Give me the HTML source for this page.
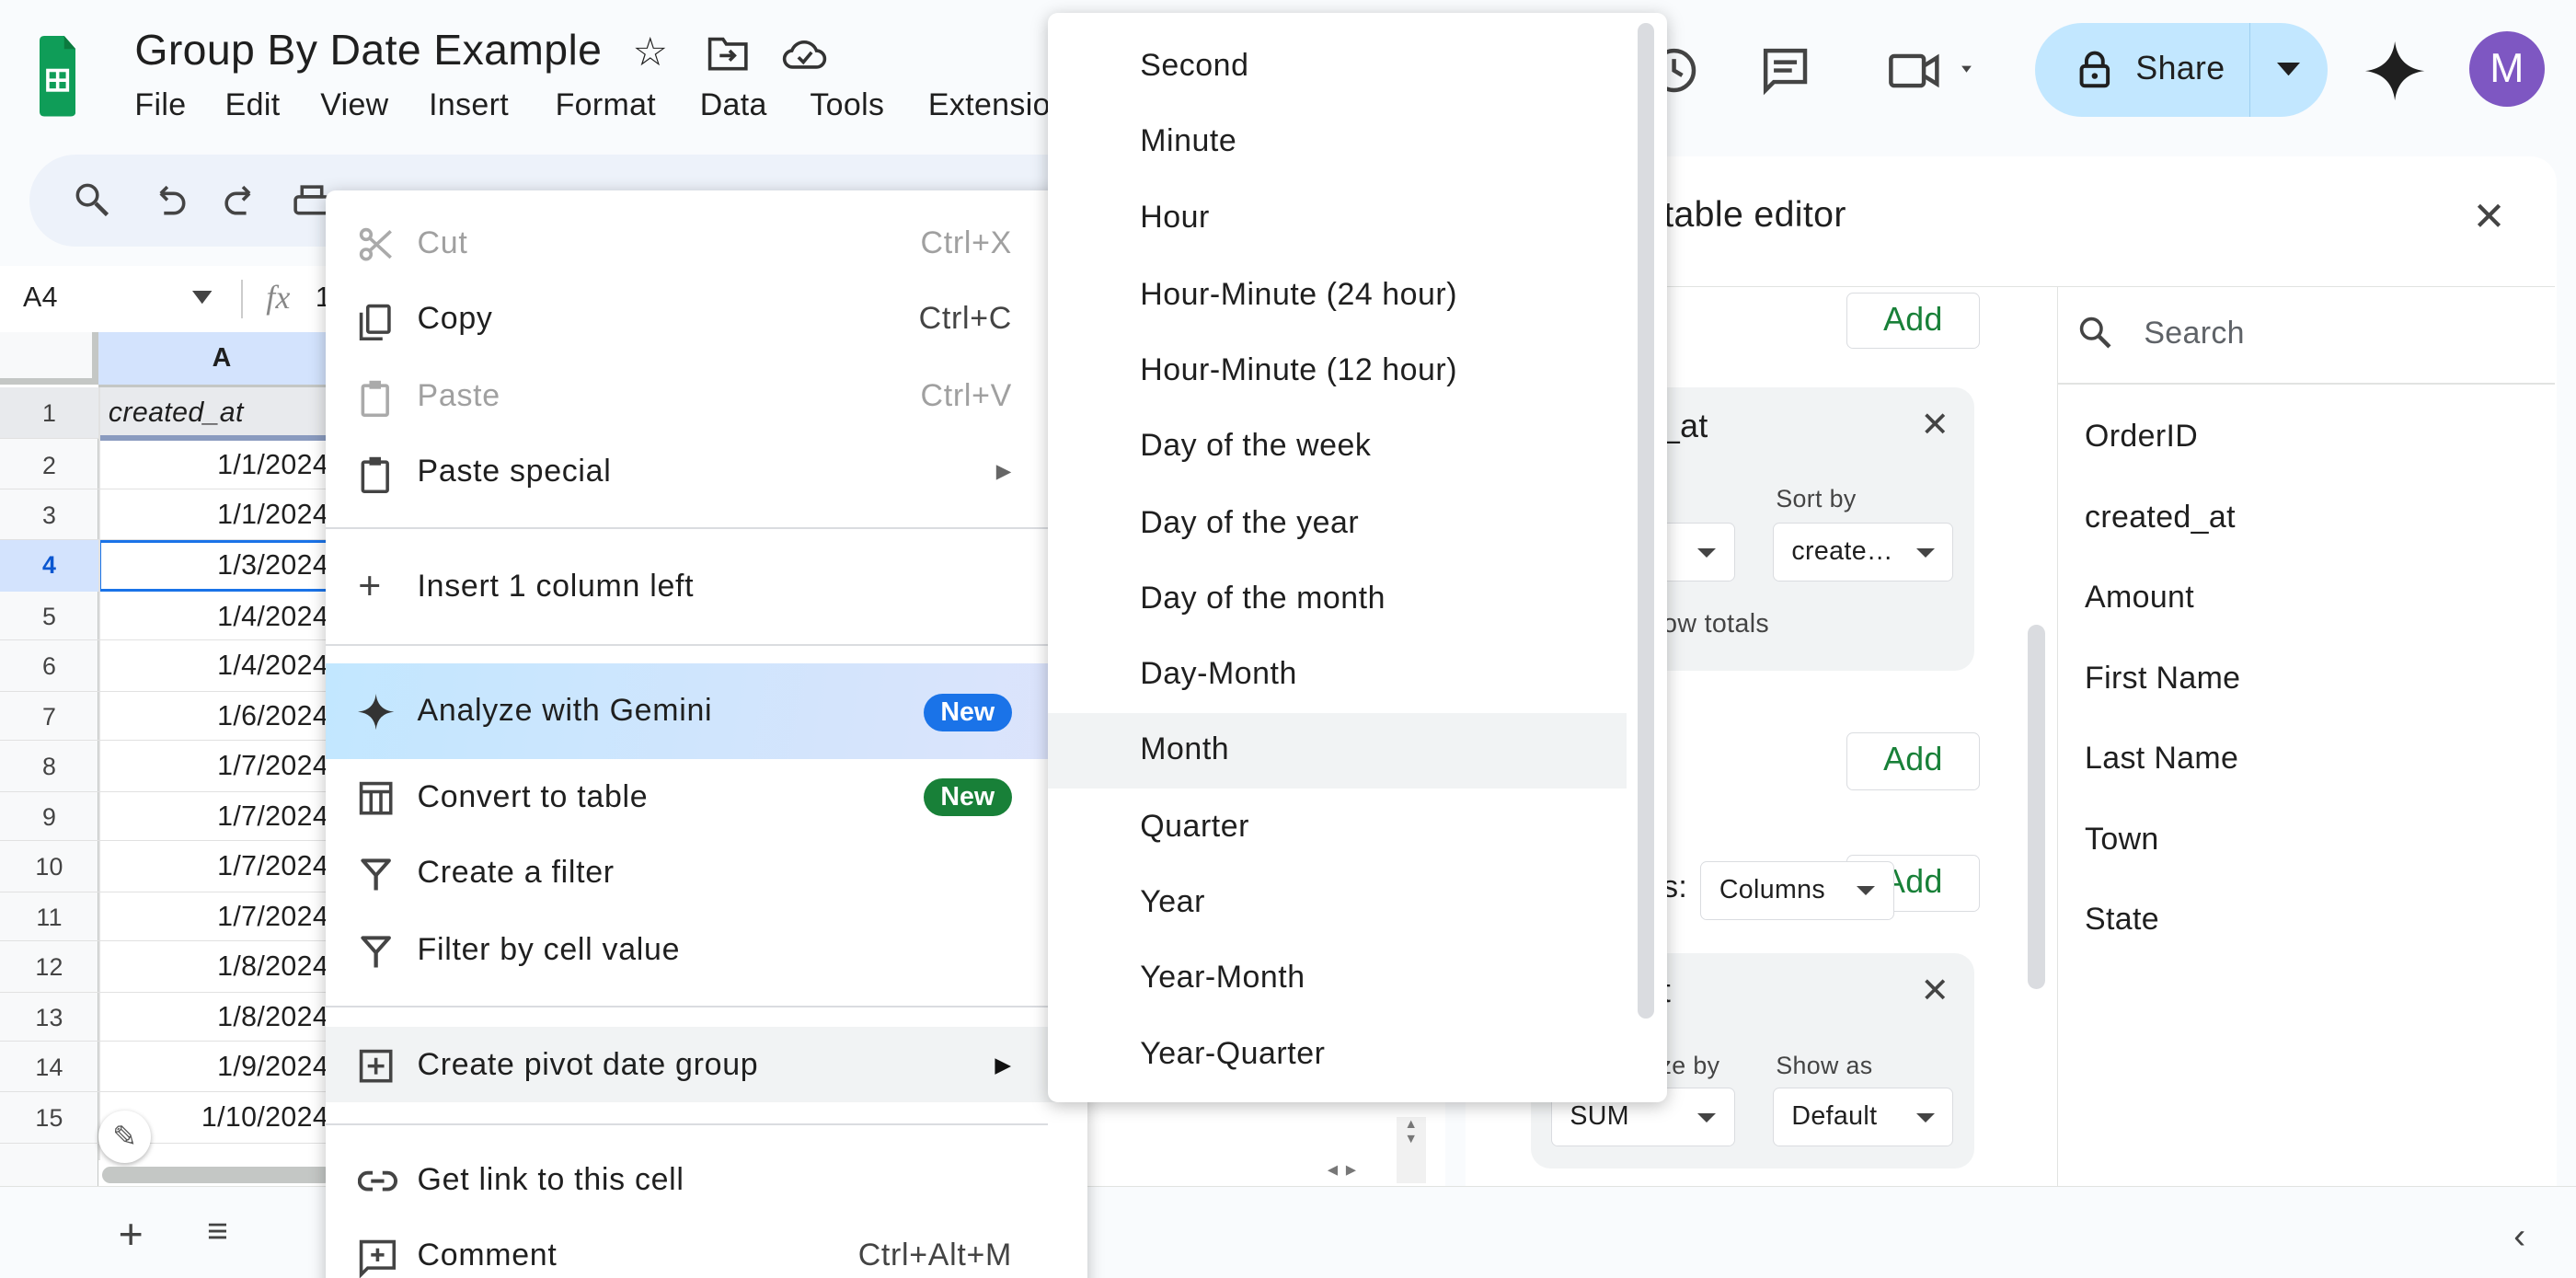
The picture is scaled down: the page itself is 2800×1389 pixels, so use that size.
<!DOCTYPE html>
<html><head><meta charset="utf-8"><style>
*{margin:0;padding:0;box-sizing:border-box}
html,body{width:2800px;height:1389px;overflow:hidden;background:#f9fbfd}
#r{zoom:1.7857;width:1568px;height:778px;position:relative;font-family:"Liberation Sans",Arial,sans-serif;color:#1f1f1f;overflow:hidden;letter-spacing:0.2px}
.a{position:absolute;white-space:nowrap}
.mi{position:absolute;left:0;width:464px;height:46px;font-size:19px;line-height:46px;padding-left:56px;letter-spacing:0.4px}
.mi .k{position:absolute;right:46px;top:0;color:#444}
.mi svg{position:absolute;left:20px;top:13px}
.sep{position:absolute;left:0;width:440px;height:1px;background:#dadce0}
.si{position:absolute;left:56px;font-size:19px;line-height:46px;height:46px;letter-spacing:0.3px}
.row{position:absolute;left:0;width:200px;height:31px;border-bottom:1px solid #e1e1e1}
.rn{position:absolute;left:0;width:60px;text-align:center;font-size:15px;color:#444;top:7px}
.rv{position:absolute;right:0;top:6px;font-size:17px}
.btn{position:absolute;border:1px solid #dadce0;border-radius:4px;background:#fff;color:#188038;font-size:20px;text-align:center;line-height:32px}
.dd{position:absolute;border:1px solid #dadce0;border-radius:4px;background:#fff;font-size:16px;line-height:34px;padding-left:11px;height:36px}
.dd:after{content:"";position:absolute;right:11px;top:15px;border:6px solid transparent;border-top-color:#444;border-bottom:0}
.fl{position:absolute;left:1269px;font-size:19px;color:#1f1f1f}
.mb{position:absolute;top:53px;font-size:19px}
</style></head><body><div id="r">
<!-- header -->
<svg class="a" style="left:24px;top:22px" width="22" height="49" viewBox="0 0 22 49"><path d="M0 3Q0 0 3 0H15L22 8V46Q22 49 19 49H3Q0 49 0 46Z" fill="#0f9d58"/><path d="M15 0V8H22Z" fill="#0b7a3e"/><rect x="5" y="21" width="12" height="12" fill="none" stroke="#fff" stroke-width="2"/><path d="M5 27H17M11 21V33" stroke="#fff" stroke-width="2"/></svg>
<div class="a" style="left:82px;top:15px;font-size:26px">Group By Date Example</div>
<div class="a" style="left:385px;top:18px;font-size:24px">☆</div>
<svg class="a" style="left:430px;top:22px" width="26" height="22" viewBox="0 0 26 22"><path d="M2 2H10L12 5H24V20H2Z" fill="none" stroke="#333" stroke-width="2"/><path d="M8 12H17M14 9L17 12L14 15" fill="none" stroke="#333" stroke-width="2"/></svg>
<svg class="a" style="left:476px;top:22px" width="28" height="22" viewBox="0 0 28 22"><path d="M7 19H21A5 5 0 0 0 21 9A8 8 0 0 0 6 9A5 5 0 0 0 7 19Z" fill="none" stroke="#333" stroke-width="2"/><path d="M10 13L13 16L18 10" fill="none" stroke="#333" stroke-width="2"/></svg>
<div class="mb" style="left:82px">File</div><div class="mb" style="left:137px">Edit</div><div class="mb" style="left:195px">View</div><div class="mb" style="left:261px">Insert</div><div class="mb" style="left:338px">Format</div><div class="mb" style="left:426px">Data</div><div class="mb" style="left:493px">Tools</div><div class="mb" style="left:565px">Extensions</div>
<div class="a" style="left:18px;top:94px;width:900px;height:56px;border-radius:28px;background:#edf2fa"></div>
<svg class="a" style="left:44px;top:110px" width="24" height="24" viewBox="0 0 24 24"><circle cx="9" cy="9" r="6" fill="none" stroke="#444" stroke-width="2"/><path d="M14 14L21 21" stroke="#444" stroke-width="2.5"/></svg>
<svg class="a" style="left:92px;top:110px" width="110" height="26" viewBox="0 0 110 26"><path d="M6 8H14A6 6 0 0 1 14 20H8M6 8L10 4M6 8L10 12" fill="none" stroke="#444" stroke-width="2"/><path d="M60 8H52A6 6 0 0 0 52 20H58M60 8L56 4M60 8L56 12" fill="none" stroke="#444" stroke-width="2"/><rect x="92" y="4" width="12" height="6" fill="none" stroke="#444" stroke-width="2"/><rect x="88" y="10" width="20" height="10" rx="2" fill="none" stroke="#444" stroke-width="2"/></svg>
<!-- right header -->
<svg class="a" style="left:1003px;top:27px" width="32" height="32" viewBox="0 0 32 32"><circle cx="16" cy="16" r="12" fill="none" stroke="#444" stroke-width="2.5"/><path d="M16 9V16L21 19" fill="none" stroke="#444" stroke-width="2.5"/></svg>
<svg class="a" style="left:1071px;top:27px" width="32" height="32" viewBox="0 0 32 32"><path d="M4 4H28V23H9L4 28Z" fill="none" stroke="#444" stroke-width="2.5"/><path d="M9 11H23M9 16H20" stroke="#444" stroke-width="2.5"/></svg>
<svg class="a" style="left:1148px;top:29px" width="60" height="28" viewBox="0 0 60 28"><rect x="3" y="5" width="20" height="18" rx="2" fill="none" stroke="#444" stroke-width="2.5"/><path d="M23 11L31 6V22L23 17" fill="none" stroke="#444" stroke-width="2.5"/><path d="M46 11L52 11L49 15Z" fill="#444"/></svg>
<div class="a" style="left:1239px;top:14px;width:178px;height:57px;border-radius:29px;background:#c2e7ff"></div>
<div class="a" style="left:1369px;top:14px;width:1px;height:57px;background:#9fcff0"></div>
<svg class="a" style="left:1265px;top:30px" width="20" height="24" viewBox="0 0 20 24"><rect x="2" y="10" width="16" height="12" rx="2" fill="none" stroke="#1f1f1f" stroke-width="2.2"/><path d="M5 10V7A5 5 0 0 1 15 7V10" fill="none" stroke="#1f1f1f" stroke-width="2.2"/><circle cx="10" cy="16" r="1.8" fill="#1f1f1f"/></svg>
<div class="a" style="left:1300px;top:30px;font-size:20px;font-weight:500">Share</div>
<svg class="a" style="left:1386px;top:38px" width="14" height="8"><path d="M0 0H14L7 8Z" fill="#1f1f1f"/></svg>
<svg class="a" style="left:1440px;top:25px" width="36" height="36" viewBox="0 0 36 36"><path d="M18 0Q20 16 36 18Q20 20 18 36Q16 20 0 18Q16 16 18 0Z" fill="#1f1f1f"/></svg>
<div class="a" style="left:1503px;top:19px;width:46px;height:46px;border-radius:50%;background:#7e57c2;color:#fff;font-size:25px;text-align:center;line-height:46px">M</div>
<!-- namebox row -->
<div class="a" style="left:0;top:162px;width:900px;height:40px;background:#fff"></div>
<div class="a" style="left:14px;top:172px;font-size:17px">A4</div>
<svg class="a" style="left:117px;top:177px" width="12" height="8"><path d="M0 0H12L6 8Z" fill="#444"/></svg>
<div class="a" style="left:147px;top:170px;width:1px;height:24px;background:#ccc"></div>
<div class="a" style="left:162px;top:169px;font-size:20px;font-style:italic;color:#888;font-family:'Liberation Serif',serif">fx</div>
<div class="a" style="left:192px;top:172px;font-size:17px">1</div>
<!-- grid -->
<div class="a" style="left:0;top:202px;width:880px;height:520px;background:#fff"></div>
<div class="a" style="left:0;top:202px;width:60px;height:32px;background:#f8f9fa;border-right:4px solid #c4c7c5;border-bottom:4px solid #c4c7c5"></div>
<div class="a" style="left:60px;top:202px;width:150px;height:32px;background:#d3e3fd;text-align:center;font-size:16px;line-height:32px;font-weight:bold">A</div>
<div class="a" style="left:60px;top:234px;width:150px;height:2px;background:#c4c7c5"></div>
<div class="a" style="left:0;top:236px;width:60px;height:486px;background:#f8f9fa;border-right:1px solid #c4c7c5"></div>
<div class="a" style="left:0;top:236px;width:880px">
<div class="row" style="top:0;background:#e8eaed"><div class="rn">1</div><div class="a" style="left:66px;top:6px;font-size:17px;font-style:italic">created_at</div></div>
<div class="a" style="left:60px;top:29px;width:140px;height:3px;background:#8a9bbf"></div>
<div class="row" style="top:32px;height:30px"><div class="rn">2</div><div class="rv">1/1/2024</div></div>
<div class="row" style="top:62px;height:31px"><div class="rn">3</div><div class="rv">1/1/2024</div></div>
<div class="row" style="top:93px;height:31px;"><div class="rn" style="background:#d3e3fd;height:31px;top:0;line-height:31px;font-weight:bold;color:#0b57d0">4</div><div class="rv">1/3/2024</div></div>
<div class="a" style="left:60px;top:93px;width:150px;height:31px;border:2px solid #1a73e8"></div>
<div class="row" style="top:124px;height:30px"><div class="rn">5</div><div class="rv">1/4/2024</div></div>
<div class="row" style="top:154px;height:31px"><div class="rn">6</div><div class="rv">1/4/2024</div></div>
<div class="row" style="top:185px;height:30px"><div class="rn">7</div><div class="rv">1/6/2024</div></div>
<div class="row" style="top:215px;height:31px"><div class="rn">8</div><div class="rv">1/7/2024</div></div>
<div class="row" style="top:246px;height:30px"><div class="rn">9</div><div class="rv">1/7/2024</div></div>
<div class="row" style="top:276px;height:31px"><div class="rn">10</div><div class="rv">1/7/2024</div></div>
<div class="row" style="top:307px;height:30px"><div class="rn">11</div><div class="rv">1/7/2024</div></div>
<div class="row" style="top:337px;height:31px"><div class="rn">12</div><div class="rv">1/8/2024</div></div>
<div class="row" style="top:368px;height:30px"><div class="rn">13</div><div class="rv">1/8/2024</div></div>
<div class="row" style="top:398px;height:31px"><div class="rn">14</div><div class="rv">1/9/2024</div></div>
<div class="row" style="top:429px;height:31px"><div class="rn">15</div><div class="rv">1/10/2024</div></div>
</div>
<div class="a" style="left:60px;top:236px;width:1px;height:470px;background:#e1e1e1"></div>
<div class="a" style="left:60px;top:676px;width:32px;height:32px;border-radius:50%;background:#fff;box-shadow:0 1px 3px rgba(0,0,0,.3);font-size:18px;text-align:center;line-height:32px;color:#555">✎</div>
<div class="a" style="left:62px;top:710px;width:140px;height:10px;border-radius:5px;background:#c4c7c5"></div>
<div class="a" style="left:850px;top:680px;width:18px;height:40px;background:#f1f1f1;font-size:8px;color:#777;text-align:center">▲<br>▼</div>
<div class="a" style="left:808px;top:708px;width:45px;height:14px;font-size:8px;color:#777">◀ &nbsp;▶</div>
<!-- bottom bar -->
<div class="a" style="left:0;top:722px;width:1568px;height:56px;background:#f9fbfd;border-top:1px solid #e1e3e1"></div>
<div class="a" style="left:72px;top:736px;font-size:26px;color:#444">+</div>
<div class="a" style="left:126px;top:737px;font-size:22px;color:#444">≡</div>
<div class="a" style="left:1530px;top:740px;font-size:22px;color:#444">‹</div>
<!-- side panel -->
<div class="a" style="left:892px;top:95px;width:664px;height:627px;background:#fff;border-radius:16px 16px 0 0"></div>
<div class="a" style="left:1000px;top:118px;font-size:22px">t table editor</div>
<div class="a" style="left:1505px;top:118px;font-size:24px;color:#444">✕</div>
<div class="a" style="left:892px;top:174px;width:663px;height:1px;background:#e1e3e1"></div>
<div class="a" style="left:1252px;top:174px;width:1px;height:548px;background:#e1e3e1"></div>
<div class="a" style="left:1253px;top:233px;width:302px;height:1px;background:#e1e3e1"></div>
<svg class="a" style="left:1265px;top:192px" width="22" height="22" viewBox="0 0 22 22"><circle cx="8" cy="8" r="6" fill="none" stroke="#444" stroke-width="2"/><path d="M12.5 12.5L19 19" stroke="#444" stroke-width="2.5"/></svg>
<div class="a" style="left:1305px;top:192px;font-size:19px;color:#5f6368">Search</div>
<div class="fl" style="top:255px">OrderID</div>
<div class="fl" style="top:304px">created_at</div>
<div class="fl" style="top:353px">Amount</div>
<div class="fl" style="top:402px">First Name</div>
<div class="fl" style="top:451px">Last Name</div>
<div class="fl" style="top:500px">Town</div>
<div class="fl" style="top:549px">State</div>
<div class="a" style="left:1234px;top:380px;width:11px;height:222px;border-radius:6px;background:#dadce0"></div>
<div class="btn" style="left:1124px;top:178px;width:81px;height:34px">Add</div>
<div class="a" style="left:932px;top:236px;width:270px;height:172px;border-radius:12px;background:#f1f3f4"></div>
<div class="a" style="left:1000px;top:248px;font-size:20px;font-weight:500">d_at</div>
<div class="a" style="left:1169px;top:246px;font-size:21px;color:#444">✕</div>
<div class="a" style="left:1081px;top:295px;font-size:15px;color:#444">Sort by</div>
<div class="dd" style="left:944px;top:318px;width:112px"></div>
<div class="dd" style="left:1079px;top:318px;width:110px">create…</div>
<div class="a" style="left:1012px;top:371px;font-size:16px;color:#444">ow totals</div>
<div class="btn" style="left:1124px;top:446px;width:81px;height:35px">Add</div>
<div class="btn" style="left:1124px;top:520px;width:81px;height:35px">Add</div>
<div class="a" style="left:1012px;top:529px;font-size:19px;font-weight:500">s:</div>
<div class="dd" style="left:1035px;top:524px;width:118px;height:36px">Columns</div>
<div class="a" style="left:932px;top:580px;width:270px;height:131px;border-radius:12px;background:#f1f3f4"></div>
<div class="a" style="left:1000px;top:592px;font-size:20px;font-weight:500">nt</div>
<div class="a" style="left:1169px;top:590px;font-size:21px;color:#444">✕</div>
<div class="a" style="left:1010px;top:640px;font-size:15px;color:#444">ze by</div>
<div class="a" style="left:1081px;top:640px;font-size:15px;color:#444">Show as</div>
<div class="dd" style="left:944px;top:662px;width:112px">SUM</div>
<div class="dd" style="left:1079px;top:662px;width:110px">Default</div>
<!-- context menu -->
<div class="a" style="left:198px;top:116px;width:464px;height:680px;background:#fff;border-radius:6px;box-shadow:0 2px 10px rgba(0,0,0,.25)">
<div class="mi" style="top:9px;color:#a0a0a0"><svg width="22" height="22" viewBox="0 0 22 22"><circle cx="5" cy="5" r="3" fill="none" stroke="#aaa" stroke-width="2"/><circle cx="5" cy="17" r="3" fill="none" stroke="#aaa" stroke-width="2"/><path d="M7 7L20 19M7 15L20 3" stroke="#aaa" stroke-width="2"/></svg>Cut<span class="k" style="color:#a0a0a0">Ctrl+X</span></div>
<div class="mi" style="top:55px"><svg width="22" height="24" viewBox="0 0 22 24"><rect x="6" y="2" width="13" height="16" rx="1" fill="none" stroke="#444" stroke-width="2"/><path d="M2 6V22H15" fill="none" stroke="#444" stroke-width="2"/></svg>Copy<span class="k">Ctrl+C</span></div>
<div class="mi" style="top:102px;color:#a0a0a0"><svg width="22" height="24" viewBox="0 0 22 24"><rect x="3" y="4" width="15" height="18" rx="1" fill="none" stroke="#aaa" stroke-width="2"/><rect x="7" y="1" width="7" height="5" fill="#aaa"/></svg>Paste<span class="k" style="color:#a0a0a0">Ctrl+V</span></div>
<div class="mi" style="top:148px"><svg width="22" height="24" viewBox="0 0 22 24"><rect x="3" y="4" width="15" height="18" rx="1" fill="none" stroke="#444" stroke-width="2"/><rect x="7" y="1" width="7" height="5" fill="#444"/></svg>Paste special<span class="k" style="font-size:12px;color:#666">▶</span></div>
<div class="sep" style="top:205px"></div>
<div class="mi" style="top:218px"><span class="a" style="left:20px;top:0;font-size:24px;color:#444">+</span>Insert 1 column left</div>
<div class="sep" style="top:276px"></div>
<div class="mi" style="top:288px;height:58px;line-height:58px;background:linear-gradient(100deg,#c2e7ff,#dde3fb)"><svg width="22" height="22" viewBox="0 0 22 22" style="top:18px"><path d="M11 0Q12 10 22 11Q12 12 11 22Q10 12 0 11Q10 10 11 0Z" fill="#333"/></svg>Analyze with Gemini<span class="a" style="right:46px;top:18px;height:23px;width:54px;border-radius:12px;background:#1a73e8;color:#fff;font-size:16px;font-weight:bold;line-height:23px;text-align:center;letter-spacing:0">New</span></div>
<div class="mi" style="top:346px"><svg width="22" height="22" viewBox="0 0 22 22"><rect x="2" y="2" width="18" height="18" fill="none" stroke="#444" stroke-width="2"/><path d="M2 7H20M8 7V20M14 7V20" stroke="#444" stroke-width="2"/></svg>Convert to table<span class="a" style="right:46px;top:12px;height:23px;width:54px;border-radius:12px;background:#188038;color:#fff;font-size:16px;font-weight:bold;line-height:23px;text-align:center;letter-spacing:0">New</span></div>
<div class="mi" style="top:392px"><svg width="22" height="22" viewBox="0 0 22 22"><path d="M3 3H19L11 12Z" fill="none" stroke="#444" stroke-width="2.2" stroke-linejoin="round"/><path d="M11 12V21" stroke="#444" stroke-width="2.4"/></svg>Create a filter</div>
<div class="mi" style="top:439px"><svg width="22" height="22" viewBox="0 0 22 22"><path d="M3 3H19L11 12Z" fill="none" stroke="#444" stroke-width="2.2" stroke-linejoin="round"/><path d="M11 12V21" stroke="#444" stroke-width="2.4"/></svg>Filter by cell value</div>
<div class="sep" style="top:496px"></div>
<div class="mi" style="top:509px;background:#f1f3f4"><svg width="22" height="22" viewBox="0 0 22 22"><rect x="2" y="2" width="18" height="18" fill="none" stroke="#444" stroke-width="2"/><path d="M11 6V16M6 11H16" stroke="#444" stroke-width="2"/></svg>Create pivot date group<span class="k" style="font-size:13px;color:#111">▶</span></div>
<div class="sep" style="top:568px"></div>
<div class="mi" style="top:579px"><svg width="24" height="22" viewBox="0 0 24 22"><path d="M9 6H6A5 5 0 0 0 6 16H9M15 6H18A5 5 0 0 1 18 16H15M8 11H16" fill="none" stroke="#444" stroke-width="2.2"/></svg>Get link to this cell</div>
<div class="mi" style="top:625px"><svg width="24" height="24" viewBox="0 0 24 24"><path d="M2 2H22V18H6L2 22Z" fill="none" stroke="#444" stroke-width="2"/><path d="M12 6V14M8 10H16" stroke="#444" stroke-width="2"/></svg>Comment<span class="k">Ctrl+Alt+M</span></div>
</div>
<!-- submenu -->
<div class="a" style="left:638px;top:8px;width:377px;height:663px;background:#fff;border-radius:6px;box-shadow:0 2px 10px rgba(0,0,0,.25)">
<div class="a" style="left:0;top:426px;width:352px;height:46px;background:#f1f3f4"></div>
<div class="a" style="left:359px;top:6px;width:10px;height:606px;border-radius:5px;background:#dadce0"></div>
<div class="si" style="top:9px">Second</div>
<div class="si" style="top:55px">Minute</div>
<div class="si" style="top:101px">Hour</div>
<div class="si" style="top:148px">Hour-Minute (24 hour)</div>
<div class="si" style="top:194px">Hour-Minute (12 hour)</div>
<div class="si" style="top:240px">Day of the week</div>
<div class="si" style="top:287px">Day of the year</div>
<div class="si" style="top:333px">Day of the month</div>
<div class="si" style="top:379px">Day-Month</div>
<div class="si" style="top:425px">Month</div>
<div class="si" style="top:472px">Quarter</div>
<div class="si" style="top:518px">Year</div>
<div class="si" style="top:564px">Year-Month</div>
<div class="si" style="top:610px">Year-Quarter</div>
</div>
</div></body></html>
